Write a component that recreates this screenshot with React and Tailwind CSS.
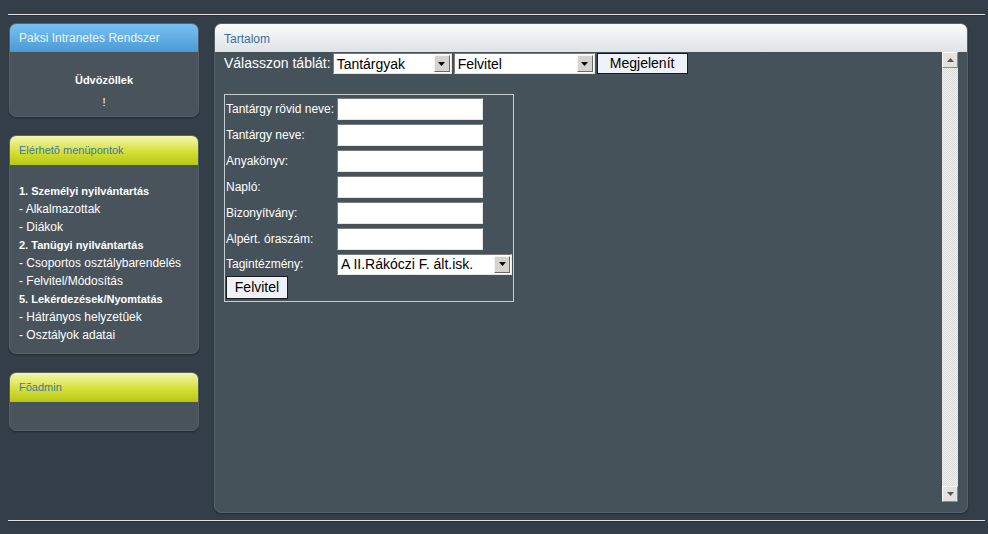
import React from "react";

const Arrow = ({ down = true }) => (
  <span className="flex h-[17px] w-[16px] items-center justify-center border border-[#f4f4f0] border-r-[#6a6a6a] border-b-[#6a6a6a] bg-[#d6d3ce]">
    <svg width="7" height="4" viewBox="0 0 7 4">
      <path d={down ? "M0 0h7L3.5 4z" : "M0 4h7L3.5 0z"} fill="#000" />
    </svg>
  </span>
);

const ScrollArrow = ({ down = true }) => (
  <span className="flex h-[16px] w-[16px] items-center justify-center border border-[#fafafa] border-r-[#8a8a8a] border-b-[#8a8a8a] bg-[#e4e2de]">
    <svg width="7" height="4" viewBox="0 0 7 4">
      <path d={down ? "M0 0h7L3.5 4z" : "M0 4h7L3.5 0z"} fill="#55585c" />
    </svg>
  </span>
);

const FakeSelect = ({ value, w }) => (
  <div className={`flex h-[21px] ${w} items-center justify-between border border-[#7a7a7a] border-r-[#e6e6e6] border-b-[#e6e6e6] bg-white pl-[3px] pr-[1px] text-[14px] text-black`}>
    <span className="leading-none">{value}</span>
    <Arrow />
  </div>
);

const Field = ({ label }) => (
  <div className="flex h-[26px] items-center">
    <span className="w-[111px] text-[12px] text-white">{label}</span>
    <div className="h-[22px] w-[146px] border border-[#7a7a7a] border-r-[#e4e4e4] border-b-[#e4e4e4] bg-white" />
  </div>
);

const SidePanel = ({ title, tone, children, bodyClass }) => (
  <div className="overflow-hidden rounded-[7px] border border-[#57636c] bg-[#48535c] shadow-[0_1px_2px_rgba(0,0,0,0.35)]">
    <div
      className={
        tone === "blue"
          ? "flex h-[28px] items-center bg-gradient-to-b from-[#78c0f0] to-[#4b9ad6] px-[9px] text-[12px] text-[#e6f6ff]"
          : "flex h-[29px] items-center bg-gradient-to-b from-[#f2f6a8] via-[#d8e23c] to-[#b6c80c] px-[9px] text-[11px] text-[#3d78a6]"
      }
    >
      {title}
    </div>
    <div className={bodyClass}>{children}</div>
  </div>
);

export default function App() {
  const menu = [
    { t: "1. Személyi nyilvántartás", b: true },
    { t: "- Alkalmazottak" },
    { t: "- Diákok" },
    { t: "2. Tanügyi nyilvántartás", b: true },
    { t: "- Csoportos osztálybarendelés" },
    { t: "- Felvitel/Módosítás" },
    { t: "5. Lekérdezések/Nyomtatás", b: true },
    { t: "- Hátrányos helyzetûek" },
    { t: "- Osztályok adatai" },
  ];

  return (
    <div className="h-[534px] w-[988px] overflow-hidden bg-[#333e48] pt-[14px] font-['Liberation_Sans',Arial,sans-serif]">
      <div className="ml-[8px] mr-[3px] h-[2px] border-b border-[#28313a] bg-[#dfe3e6]" />

      <div className="mt-[7px] flex h-[490px] gap-[15px] pl-[9px]">
        <div className="flex w-[190px] flex-col gap-[18px]">
          <SidePanel title="Paksi Intranetes Rendszer" tone="blue" bodyClass="flex h-[64px] flex-col items-center pt-[20px] text-[11px] text-white">
            <b>Üdvözöllek</b>
            <span className="mt-[5px]">!</span>
          </SidePanel>

          <SidePanel title="Elérhetõ menüpontok" tone="yellow" bodyClass="h-[188px] pl-[9px] pt-[17px]">
            {menu.map((m) => (
              <div
                key={m.t}
                className={m.b ? "h-[18px] text-[11px] font-bold leading-[18px] text-white" : "h-[18px] text-[12px] leading-[18px] text-white"}
              >
                {m.t}
              </div>
            ))}
          </SidePanel>

          <SidePanel title="Fõadmin" tone="yellow" bodyClass="h-[28px]" />
        </div>

        <div className="flex w-[754px] flex-col overflow-hidden rounded-[7px] border border-[#57636c] bg-[#465259] shadow-[0_1px_2px_rgba(0,0,0,0.35)]">
          <div className="flex h-[28px] shrink-0 items-center bg-gradient-to-b from-[#fbfcfc] to-[#dde3e6] px-[9px] pt-[2px] text-[12px] text-[#3b6ea6]">
            Tartalom
          </div>
          <div className="flex flex-1 pb-[10px] pr-[9px]">
            <div className="flex-1 pl-[9px] pt-[1px]">
              <div className="flex items-center gap-[2px]">
                <span className="text-[14px] text-white">Válasszon táblát:</span>
                <FakeSelect value="Tantárgyak" w="w-[119px]" />
                <FakeSelect value="Felvitel" w="w-[141px]" />
                <div className="flex h-[21px] w-[91px] items-center justify-center border border-[#1a1a1a] bg-[#f0f2fa] text-[14px] text-black">
                  Megjelenít
                </div>
              </div>

              <div className="mt-[20px] w-[290px] border border-[#c4ccd0] px-[1px] pt-[1px] pb-[2px]">
                <Field label="Tantárgy rövid neve:" />
                <Field label="Tantárgy neve:" />
                <Field label="Anyakönyv:" />
                <Field label="Napló:" />
                <Field label="Bizonyítvány:" />
                <Field label="Alpért. óraszám:" />
                <div className="flex h-[24px] items-center">
                  <span className="w-[111px] text-[12px] text-white">Tagintézmény:</span>
                  <FakeSelect value="A II.Rákóczi F. ált.isk." w="w-[175px]" />
                </div>
                <div className="flex h-[23px] w-[62px] items-center justify-center border border-[#1a1a1a] bg-[#f0f2fa] text-[14px] text-black">
                  Felvitel
                </div>
              </div>
            </div>

            <div className="flex w-[16px] flex-col bg-[repeating-conic-gradient(#f2f2f2_0_25%,#d9d9d9_0_50%)] bg-[length:2px_2px]">
              <ScrollArrow down={false} />
              <div className="flex-1" />
              <ScrollArrow />
            </div>
          </div>
        </div>
      </div>

      <div className="ml-[8px] mr-[3px] mt-[7px] h-[2px] border-b border-[#28313a] bg-[#dfe3e6]" />
    </div>
  );
}
